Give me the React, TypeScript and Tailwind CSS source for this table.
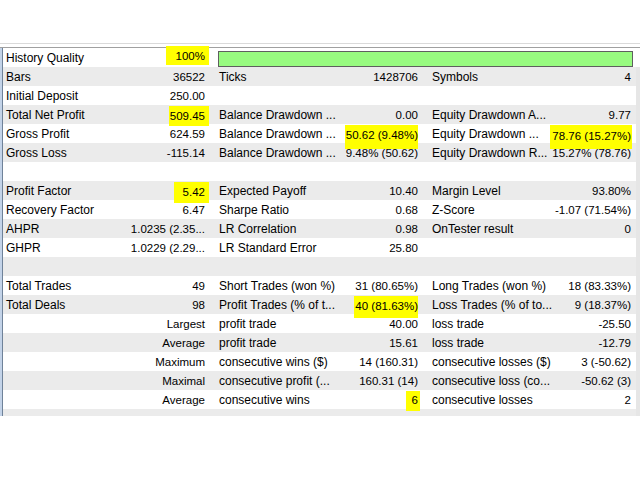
import React from "react";

type Cell = string | { t: string; hl: string };
type Row = Cell[] | null | "quality";

const rows: Row[] = [
  "quality",
  ["Bars", "36522", "Ticks", "1428706", "Symbols", "4"],
  ["Initial Deposit", "250.00", "", "", "", ""],
  ["Total Net Profit", { t: "509.45", hl: "pl-[1px] pr-[4px] -mr-[4px] pt-[1px] pb-[0px]" }, "Balance Drawdown ...", "0.00", "Equity Drawdown A...", "9.77"],
  ["Gross Profit", "624.59", "Balance Drawdown ...", { t: "50.62 (9.48%)", hl: "pl-[1px] pt-[1px] pb-[0px]" }, "Equity Drawdown ...", { t: "78.76 (15.27%)", hl: "pl-[2px] pr-[1px] -mr-[1px] pt-[2px] pb-[3px]" }],
  ["Gross Loss", "-115.14", "Balance Drawdown ...", "9.48% (50.62)", "Equity Drawdown R...", "15.27% (78.76)"],
  null,
  ["Profit Factor", { t: "5.42", hl: "pl-[9px] pr-[4px] -mr-[4px] pt-[1px] pb-[1px]" }, "Expected Payoff", "10.40", "Margin Level", "93.80%"],
  ["Recovery Factor", "6.47", "Sharpe Ratio", "0.68", "Z-Score", "-1.07 (71.54%)"],
  ["AHPR", "1.0235 (2.35...", "LR Correlation", "0.98", "OnTester result", "0"],
  ["GHPR", "1.0229 (2.29...", "LR Standard Error", "25.80", "", ""],
  null,
  ["Total Trades", "49", "Short Trades (won %)", "31 (80.65%)", "Long Trades (won %)", "18 (83.33%)"],
  ["Total Deals", "98", "Profit Trades (% of t...", { t: "40 (81.63%)", hl: "pl-[1px] pt-[1px] pb-[2px]" }, "Loss Trades (% of to...", "9 (18.37%)"],
  ["", "Largest", "profit trade", "40.00", "loss trade", "-25.50"],
  ["", "Average", "profit trade", "15.61", "loss trade", "-12.79"],
  ["", "Maximum", "consecutive wins ($)", "14 (160.31)", "consecutive losses ($)", "3 (-50.62)"],
  ["", "Maximal", "consecutive profit (...", "160.31 (14)", "consecutive loss (co...", "-50.62 (3)"],
  ["", "Average", "consecutive wins", { t: "6", hl: "pl-[6px] pr-[2px] -mr-[2px] pt-[0px] pb-[1px]" }, "consecutive losses", "2"],
];

const valuePad = ["", "pr-[11px]", "", "pr-[11px]", "", "pr-[5px]"];

function Value({ c }: { c: Cell }) {
  if (typeof c === "string") return <span>{c}</span>;
  return <span className={`bg-[#ffff00] ${c.hl}`}>{c.t}</span>;
}

export default function App() {
  return (
    <div
      className="w-[640px] h-[480px] bg-white text-[12px] text-black overflow-hidden"
      style={{ fontFamily: '"Liberation Sans", Arial, sans-serif' }}
    >
      <div className="h-[43px]" />
      <div className="h-px bg-[#dadada]" />
      <div className="h-[3px]" />
      <div className="flex border-t border-[#a0a0a0]">
        <div className="w-[2px] bg-[#c3d3e8]" />
        <div className="w-px bg-[#6f8299]" />
        <div className="w-[633px]">
          {rows.map((r, i) => {
            const bg = i % 2 === 1 ? "bg-[#ebebeb]" : "bg-white";
            if (r === "quality") {
              return (
                <div key={i} className={`grid grid-cols-[128px_85px_420px] h-[19px] leading-[19px] ${bg}`}>
                  <div className="pl-[3px] pt-px whitespace-nowrap">History Quality</div>
                  <div className="flex justify-end pr-[11px] whitespace-nowrap text-[11.5px]">
                    <span className="bg-[#ffff00] pl-[10px] pr-[4px] -mr-[4px] pt-[4px] pb-[3px] leading-[12px] self-start mt-[-2px]">100%</span>
                  </div>
                  <div className="pl-[2px] pr-[3px] pt-[3px]">
                    <div className="h-[16px] bg-[#98fb80] border border-[#5f5f5f]" />
                  </div>
                </div>
              );
            }
            return (
              <div key={i} className={`grid grid-cols-[128px_85px_128px_85px_128px_79px] h-[19px] pt-px leading-[19px] ${bg}`}>
                {(r ?? ["", "", "", "", "", ""]).map((c, j) =>
                  j % 2 === 0 ? (
                    <div key={j} className="pl-[3px] whitespace-nowrap overflow-hidden">
                      {c as string}
                    </div>
                  ) : (
                    <div key={j} className={`flex justify-end whitespace-nowrap text-[11.5px] ${valuePad[j]}`}>
                      <Value c={c} />
                    </div>
                  )
                )}
              </div>
            );
          })}
          <div className="h-[7px] bg-[#ebebeb]" />
        </div>
        <div className="w-[4px] flex flex-col">
          <div className="h-[19px] bg-white" />
          <div className="flex-1 bg-[#e6e6e6]" />
        </div>
      </div>
    </div>
  );
}
